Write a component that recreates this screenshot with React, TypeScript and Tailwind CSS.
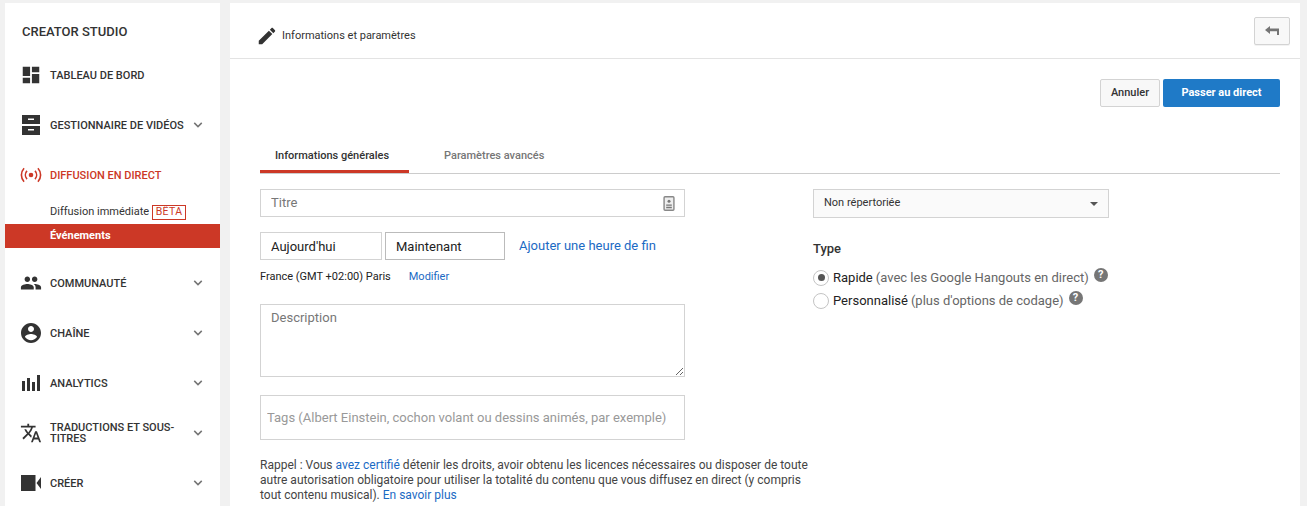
import { type ReactNode } from "react";

const font = "[font-family:Roboto,'Liberation_Sans',sans-serif]";

function Icon({ d, small = false }: { d: string; small?: boolean }) {
  return (
    <svg viewBox="0 0 24 24" className={`${small ? "size-[22px]" : "size-6"} fill-[#333]`}>
      <path d={d} />
    </svg>
  );
}

function Chevron() {
  return (
    <svg viewBox="0 0 12 8" className="h-[6px] w-[10px] fill-none stroke-[#757575] stroke-2">
      <path d="M1 1.2l5 5 5-5" />
    </svg>
  );
}

function NavRow({
  icon,
  label,
  chevron = true,
  active = false,
}: {
  icon: ReactNode;
  label: ReactNode;
  chevron?: boolean;
  active?: boolean;
}) {
  return (
    <div className="flex h-[50px] items-center pl-[14px] pr-[17px]">
      <div className="flex w-[24px] shrink-0 items-center justify-center">{icon}</div>
      <div
        className={`ml-[7px] w-[130px] shrink-0 text-[11px] leading-[11px] font-medium ${active ? "text-[#cc3826]" : "text-[#333]"}`}
      >
        {label}
      </div>
      {chevron && (
        <div className="ml-auto flex">
          <Chevron />
        </div>
      )}
    </div>
  );
}

function Sidebar() {
  return (
    <aside className="h-[503px] w-[215px] shrink-0 overflow-hidden bg-white">
      <div className="flex h-[47px] items-end pb-[10px] pl-[17px] text-[13px] leading-[16px] font-medium text-[#333]">
        CREATOR STUDIO
      </div>
      <NavRow
        chevron={false}
        label="TABLEAU DE BORD"
        icon={<Icon small d="M3 13h8V3H3v10zm0 8h8v-6H3v6zm10 0h8V11h-8v10zm0-18v6h8V3h-8z" />}
      />
      <NavRow
        label={<span className="whitespace-nowrap">GESTIONNAIRE DE VIDÉOS</span>}
        icon={
          <svg viewBox="0 0 18 20" className="h-5 w-[18px] fill-[#333]">
            <path fillRule="evenodd" d="M0 0h18v9H0zM6 3.5v1.6h6V3.5zM0 11h18v9H0zm6 3v1.6h6V14z" />
          </svg>
        }
      />
      <NavRow
        active
        chevron={false}
        label="DIFFUSION EN DIRECT"
        icon={
          <svg viewBox="0 0 24 18" className="h-[16px] w-[22px] fill-none stroke-[#cc3826] stroke-[1.8]">
            <circle cx="12" cy="9" r="2.6" className="fill-[#cc3826] stroke-0" />
            <path d="M7.5 4.4c-2.4 2.6-2.4 6.6 0 9.2M16.5 4.4c2.4 2.6 2.4 6.6 0 9.2M4.2 1.4c-4 4.4-4 10.8 0 15.2M19.8 1.4c4 4.4 4 10.8 0 15.2" />
          </svg>
        }
      />
      <div className="flex h-[24px] items-center pl-[45px] text-[11px] leading-[16px] text-[#333]">
        Diffusion immédiate
        <span className="ml-[3px] flex h-[15px] w-[34px] items-center justify-center border border-[#cc3826] text-[10.5px] tracking-[0.4px] text-[#cc3826]">
          BÊTA
        </span>
      </div>
      <div className="flex h-[24px] items-center bg-[#cc3826] pl-[45px] text-[11px] font-bold text-white">
        Événements
      </div>
      <div className="h-[10px]" />
      <NavRow
        label="COMMUNAUTÉ"
        icon={
          <Icon
            small
            d="M16 11c1.66 0 2.99-1.34 2.99-3S17.66 5 16 5c-1.66 0-3 1.34-3 3s1.34 3 3 3zm-8 0c1.66 0 2.99-1.34 2.99-3S9.66 5 8 5C6.34 5 5 6.34 5 8s1.34 3 3 3zm0 2c-2.33 0-7 1.17-7 3.5V19h14v-2.5c0-2.33-4.67-3.5-7-3.5zm8 0c-.29 0-.62.02-.97.05 1.16.84 1.97 1.97 1.97 3.45V19h6v-2.5c0-2.33-4.67-3.5-7-3.5z"
          />
        }
      />
      <NavRow
        label="CHAÎNE"
        icon={
          <Icon d="M12 2C6.48 2 2 6.48 2 12s4.48 10 10 10 10-4.48 10-10S17.52 2 12 2zm0 3c1.66 0 3 1.34 3 3s-1.34 3-3 3-3-1.34-3-3 1.34-3 3-3zm0 14.2c-2.5 0-4.71-1.28-6-3.22.03-1.99 4-3.08 6-3.08 1.99 0 5.97 1.09 6 3.08-1.29 1.94-3.5 3.22-6 3.22z" />
        }
      />
      <NavRow
        label="ANALYTICS"
        icon={
          <svg viewBox="0 0 18 16" className="h-4 w-[18px] fill-[#333]">
            <path d="M0 6h3v10H0zM5 3h3v13H5zM10 7h3v9h-3zM15 0h3v16h-3z" />
          </svg>
        }
      />
      <NavRow
        label="TRADUCTIONS ET SOUS-TITRES"
        icon={
          <Icon
            small
            d="M12.87 15.07l-2.54-2.51.03-.03c1.74-1.94 2.98-4.17 3.71-6.53H17V4h-7V2H8v2H1v1.99h11.17C11.5 7.92 10.44 9.75 9 11.35 8.07 10.32 7.3 9.19 6.69 8h-2c.73 1.63 1.73 3.17 2.98 4.56l-5.09 5.02L4 19l5-5 3.11 3.11.76-2.04zM18.5 10h-2L12 22h2l1.12-3h4.75L21 22h2l-4.5-12zm-2.62 7l1.62-4.33L19.12 17h-3.24z"
          />
        }
      />
      <NavRow
        label="CRÉER"
        icon={
          <svg viewBox="0 0 20 16" className="h-4 w-[20px] fill-[#333]">
            <path d="M0 0h14.5v16H0zM15.5 8L20 2v12z" />
          </svg>
        }
      />
    </aside>
  );
}

function HelpIcon() {
  return (
    <span className="mt-[-6px] ml-[5px] flex size-[14px] shrink-0 items-center justify-center rounded-full bg-[#767676] text-[11px] leading-none font-bold text-white">
      ?
    </span>
  );
}

function Radio({ checked, label, hint }: { checked?: boolean; label: string; hint: string }) {
  return (
    <div className="flex h-[23px] items-center text-[13px] leading-[16px] whitespace-nowrap">
      <span className="flex size-[16px] shrink-0 items-center justify-center rounded-full border border-[#c4c4c4] bg-white">
        {checked && <span className="size-[7px] rounded-full bg-[#555]" />}
      </span>
      <span className="ml-[4px] text-[#222]">{label}</span>
      <span className="ml-[3px] text-[#666]">{hint}</span>
      <HelpIcon />
    </div>
  );
}

function Main() {
  return (
    <main className="h-[503px] w-[1070px] shrink-0 overflow-hidden bg-white">
      <header className="flex h-[56px] items-center border-b border-[#e3e3e3] pr-[10px] pl-[26px]">
        <div className="mt-[10px] flex items-center">
          <svg viewBox="0 0 24 24" className="size-[22px] fill-[#333]">
            <path d="M3 17.25V21h3.75L17.81 9.94l-3.75-3.75L3 17.25zM20.71 7.04c.39-.39.39-1.02 0-1.41l-2.34-2.34c-.39-.39-1.02-.39-1.41 0l-1.83 1.83 3.75 3.75 1.83-1.83z" />
          </svg>
          <span className="mt-[2px] ml-[4px] text-[11px] text-[#333]">Informations et paramètres</span>
        </div>
        <button className="ml-auto flex h-[28px] w-[36px] items-center justify-center rounded-[2px] border border-[#d3d3d3] bg-[#f8f8f8] shadow-[0_1px_0_rgba(0,0,0,0.05)]">
          <svg viewBox="0 0 14 9" className="h-[9px] w-[14px] fill-[#757575]">
            <path d="M0 4l5-4v2.6h9V9h-2V5.2H5V8z" />
          </svg>
        </button>
      </header>

      <div className="mt-[20px] flex justify-end pr-[20px]">
        <button className="h-[28px] w-[60px] rounded-[2px] border border-[#d3d3d3] bg-[#f8f8f8] text-[11px] font-medium text-[#333]">
          Annuler
        </button>
        <button className="ml-[3px] h-[28px] w-[117px] rounded-[2px] bg-[#1f7ac7] text-[11px] font-bold text-white">
          Passer au direct
        </button>
      </div>

      <div className="mt-[38px] mr-[20px] ml-[30px] flex border-b border-[#ccc]">
        <div className="flex h-[28px] w-[149px] items-center border-b-[3px] border-[#cc3826] pb-[2px] pl-[15px] text-[11px] font-medium text-[#333]">
          Informations générales
        </div>
        <div className="ml-[35px] flex h-[28px] items-center pb-[5px] text-[11px] font-medium text-[#767676]">
          Paramètres avancés
        </div>
      </div>

      <div className="mt-[15px] ml-[30px] flex">
        <div className="w-[425px] shrink-0">
          <div className="flex h-[28px] items-center border border-[#d3d3d3] pr-[9px] pl-[10px]">
            <input
              placeholder="Titre"
              className="min-w-0 flex-1 text-[13px] outline-none placeholder:text-[#777]"
            />
            <svg viewBox="0 0 12 16" className="h-[15px] w-[12px]">
              <rect x="0.75" y="0.75" width="10.5" height="14.5" rx="1" className="fill-[#eee] stroke-[#888] stroke-[1.5]" />
              <circle cx="6" cy="5.5" r="1.6" className="fill-[#777]" />
              <path d="M3 9h6v1.5H3zM3 11.5h6V13H3z" className="fill-[#777]" />
            </svg>
          </div>

          <div className="mt-[15px] flex items-center">
            <input
              defaultValue="Aujourd'hui"
              className="h-[28px] w-[122px] border border-[#d3d3d3] px-[10px] text-[13px] text-[#222] outline-none"
            />
            <input
              defaultValue="Maintenant"
              className="ml-[3px] h-[28px] w-[120px] border border-[#bbb] px-[10px] text-[13px] text-[#222] outline-none"
            />
            <a className="ml-[14px] text-[13px] text-[#1b6ac4]">Ajouter une heure de fin</a>
          </div>

          <div className="mt-[9px] flex h-[16px] items-center text-[11px]">
            <span className="text-[#222]">France (GMT +02:00) Paris</span>
            <a className="ml-[18px] text-[#1b6ac4]">Modifier</a>
          </div>

          <textarea
            placeholder="Description"
            className="mt-[19px] block h-[73px] w-full resize-y border border-[#d3d3d3] px-[10px] py-[5px] text-[13px] leading-[16px] outline-none placeholder:text-[#777]"
          />

          <input
            placeholder="Tags (Albert Einstein, cochon volant ou dessins animés, par exemple)"
            className="mt-[18px] block h-[45px] w-full border border-[#d3d3d3] px-[6px] text-[13px] outline-none placeholder:text-[#999]"
          />

          <p className="mt-[18px] w-[560px] text-[12px] leading-[15px] text-[#444]">
            Rappel : Vous <a className="text-[#1b6ac4]">avez certifié</a> détenir les droits, avoir obtenu les licences
            nécessaires ou disposer de toute autre autorisation obligatoire pour utiliser la totalité du contenu que
            vous diffusez en direct (y compris tout contenu musical). <a className="text-[#1b6ac4]">En savoir plus</a>
          </p>
        </div>

        <div className="ml-[128px] w-[296px] shrink-0">
          <div className="flex h-[29px] items-center border border-[#d3d3d3] bg-[#fafafa] pr-[10px] pl-[10px] text-[11px] text-[#333]">
            Non répertoriée
            <span className="ml-auto h-0 w-0 border-x-[4px] border-t-[4px] border-x-transparent border-t-[#555]" />
          </div>
          <div className="mt-[21px] text-[13px] leading-[20px] font-medium text-[#333]">Type</div>
          <div className="mt-[7px]">
            <Radio checked label="Rapide" hint="(avec les Google Hangouts en direct)" />
            <Radio label="Personnalisé" hint="(plus d'options de codage)" />
          </div>
        </div>
      </div>
    </main>
  );
}

export default function App() {
  return (
    <div className={`flex h-[506px] w-[1307px] gap-[10px] overflow-hidden bg-[#f1f1f1] pt-[3px] pl-[5px] ${font}`}>
      <Sidebar />
      <Main />
    </div>
  );
}
